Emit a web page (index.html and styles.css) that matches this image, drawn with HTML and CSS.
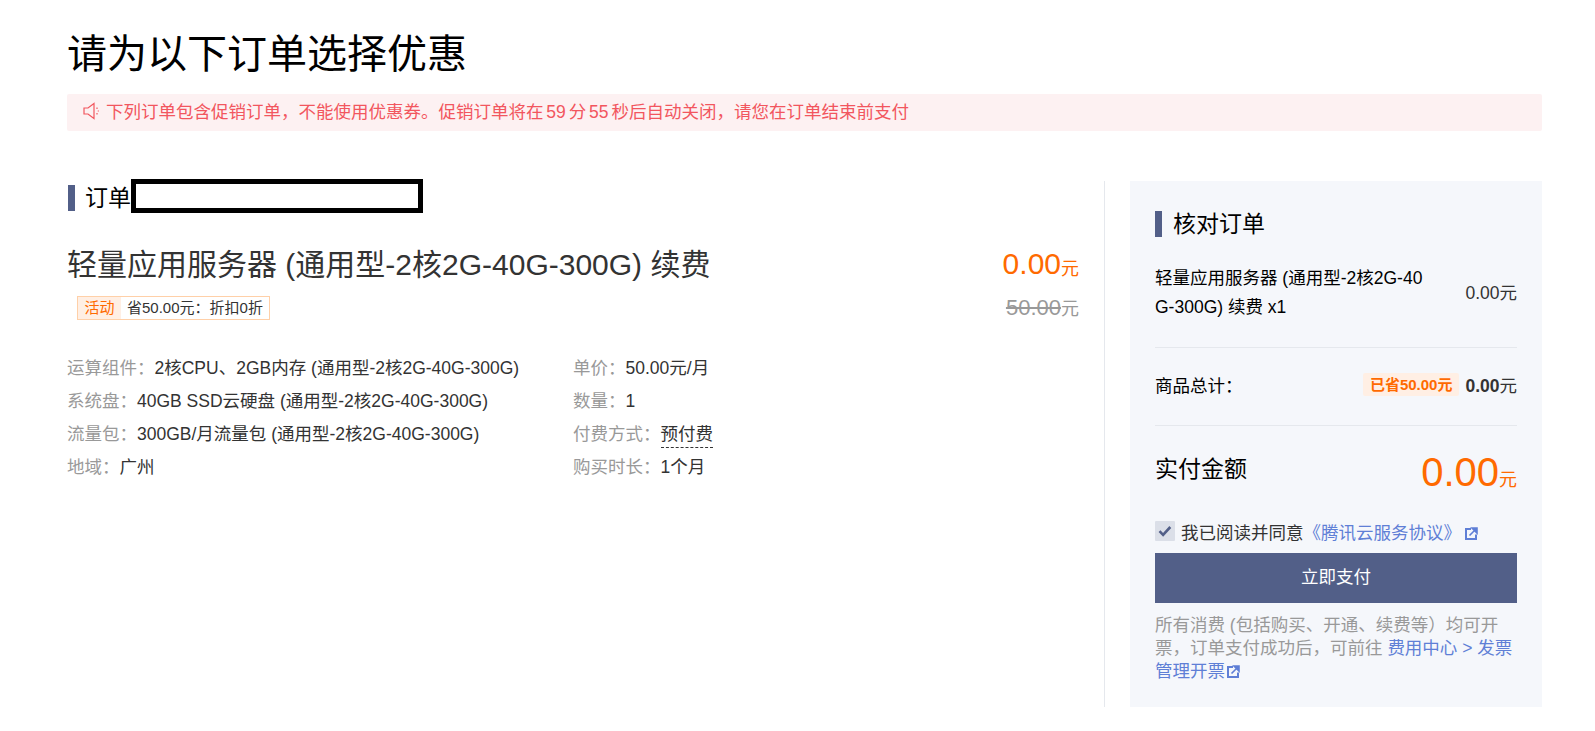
FILE: index.html
```html
<!DOCTYPE html>
<html lang="zh-CN">
<head>
<meta charset="utf-8">
<title>请为以下订单选择优惠</title>
<link rel="stylesheet" href="styles.css">
</head>
<body>
<main class="page">
  <h1 class="page-title">请为以下订单选择优惠</h1>
  <div class="notice">
    <svg class="notice-icon" width="20" height="20" viewBox="0 0 20 20" fill="none" stroke="#f2565e" stroke-width="1.2"><path d="M2 7h4l6-4.500v15L6 13H2z"/><path d="M15 6.500v1.600M15 12v1.600M16.300 9.500v1"/></svg>
    <span>下列订单包含促销订单，不能使用优惠券。促销订单将在 59 分 55 秒后自动关闭，请您在订单结束前支付</span>
  </div>
  <div class="columns">
    <section class="orders">
      <h2 class="section-title section-title-order"><span>订单</span><span class="redact"></span></h2>
      <div class="product-head">
        <h3 class="product-name">轻量应用服务器 (通用型-2核2G-40G-300G) 续费</h3>
        <div class="price"><span class="price-num">0.00</span><span class="unit">元</span></div>
      </div>
      <div class="product-sub">
        <div class="tag"><span class="tag-label">活动</span><span class="tag-text">省50.00元：折扣0折</span></div>
        <div class="old-price"><span class="old-num">50.00</span><span class="old-unit">元</span></div>
      </div>
      <div class="details">
        <ul class="detail-col detail-left">
          <li><span class="key">运算组件：</span><span>2核CPU、2GB内存 (通用型-2核2G-40G-300G)</span></li>
          <li><span class="key">系统盘：</span><span>40GB SSD云硬盘 (通用型-2核2G-40G-300G)</span></li>
          <li><span class="key">流量包：</span><span>300GB/月流量包 (通用型-2核2G-40G-300G)</span></li>
          <li><span class="key">地域：</span><span>广州</span></li>
        </ul>
        <ul class="detail-col">
          <li><span class="key">单价：</span><span>50.00元/月</span></li>
          <li><span class="key">数量：</span><span>1</span></li>
          <li><span class="key">付费方式：</span><span class="dashed">预付费</span></li>
          <li><span class="key">购买时长：</span><span>1个月</span></li>
        </ul>
      </div>
    </section>
    <aside class="summary">
      <h2 class="section-title section-title-summary">核对订单</h2>
      <div class="line-item">
        <div class="line-name">轻量应用服务器 (通用型-2核2G-40G-300G) 续费 x1</div>
        <div class="line-price">0.00元</div>
      </div>
      <div class="total-row">
        <span>商品总计：</span>
        <span class="total-right"><span class="saved">已省50.00元</span><span><b>0.00</b>元</span></span>
      </div>
      <div class="pay-row">
        <span class="pay-label">实付金额</span>
        <span class="pay-price"><span class="pay-num">0.00</span><span class="unit">元</span></span>
      </div>
      <div class="agree">
        <span class="checkbox"><svg width="14" height="12" viewBox="0 0 14 12"><path d="M1.500 6.200l3.600 3.600 7.200-7.800" fill="none" stroke="#525f88" stroke-width="2.600"/></svg></span>
        <span>我已阅读并同意</span><a class="link" href="#">《腾讯云服务协议》<svg class="ext ext-agree" width="14" height="14" viewBox="0 0 14 14"><path d="M7 2H2v10h10V7.500" fill="none" stroke="#5f7fd6" stroke-width="2"/><path d="M5.500 8.500L11.500 2.500M8 1h5v5z" fill="#5f7fd6" stroke="#5f7fd6" stroke-width="1.600"/></svg></a>
      </div>
      <button class="pay-btn" type="button">立即支付</button>
      <p class="invoice">所有消费 (包括购买、开通、续费等）均可开票，订单支付成功后，可前往 <a class="link" href="#">费用中心 &gt; 发票管理开票<svg class="ext" width="14" height="14" viewBox="0 0 14 14"><path d="M7 2H2v10h10V7.500" fill="none" stroke="#5f7fd6" stroke-width="2"/><path d="M5.500 8.500L11.500 2.500M8 1h5v5z" fill="#5f7fd6" stroke="#5f7fd6" stroke-width="1.600"/></svg></a></p>
    </aside>
  </div>
</main>
</body>
</html>
```
FILE: styles.css
```css
* { box-sizing: border-box; }
html, body { margin: 0; padding: 0; background: #fff; }
body {
  font-family: "Liberation Sans", "Noto Sans CJK SC", sans-serif;
  font-size: 17.5px;
  color: #333;
  overflow: hidden;
}
ul { list-style: none; margin: 0; padding: 0; }
a { text-decoration: none; }
.page { padding: 28px 53px 0 67px; }
.page-title { margin: 0; font-size: 40px; line-height: 52px; font-weight: 400; color: #000; }
.notice {
  margin-top: 14px; height: 37px; padding: 0 15px 4px; display: flex; align-items: center; gap: 4px;
  background: #fdf1f2; border-radius: 2px; color: #f2565e; word-spacing: -2px;
}
.notice-icon { flex: none; }
.columns { display: flex; margin-top: 50px; height: 526px; }
.orders { width: 1038px; border-right: 1px solid #e5e8ed; padding-right: 24px; }
.section-title {
  margin: 0; border-left: 7px solid #525f88; font-weight: 400; color: #000;
  font-size: 23px; line-height: 26px; padding-left: 11px;
}
.section-title-order { display: flex; align-items: center; margin: 4px 0 0 1px; height: 26px; padding-left: 10px; }
.redact { display: block; width: 292px; height: 34px; margin-bottom: 4px; border: 5px solid #000; background: #fff; }
.product-head { display: flex; justify-content: space-between; align-items: baseline; margin-top: 34px; margin-right: 1px; }
.product-name { margin: 0; font-size: 30px; line-height: 40px; font-weight: 400; color: #333; }
.price { color: #ff6a00; }
.price-num { font-size: 30px; vertical-align: 1px; }
.unit { font-size: 18px; }
.product-sub { display: flex; justify-content: space-between; align-items: center; margin-top: 9px; margin-right: 1px; }
.tag { display: flex; margin-left: 10px; height: 24px; align-items: stretch; border: 1px solid #ffd0a8; font-size: 15px; line-height: 22px; color: #333; }
.tag-label { background: #ffefe4; color: #ff6a00; padding: 0 6.500px; }
.tag-text { padding: 0 6px; }
.old-price { color: #999; }
.old-num { font-size: 22px; text-decoration: line-through; }
.old-unit { font-size: 18px; }
.details { display: flex; margin-top: 31px; }
.detail-col li { height: 33px; line-height: 33px; white-space: nowrap; }
.detail-left { width: 506px; }
.key { color: #999; }
.dashed { display: inline-block; line-height: 26px; border-bottom: 1px dashed #333; }
.summary { width: 412px; margin-left: 25px; background: #f5f7fb; padding: 30px 25px 0; }
.section-title-summary { line-height: 26px; }
.line-item { display: flex; justify-content: space-between; align-items: center; margin-top: 27px; padding-bottom: 25px; border-bottom: 1px solid #e5e8ed; color: #000; }
.line-name { width: 272px; line-height: 29px; word-break: break-all; }
.line-price { color: #333; margin-bottom: 4px; }
.total-row { display: flex; justify-content: space-between; align-items: center; height: 78px; padding-bottom: 4px; border-bottom: 1px solid #e5e8ed; color: #000; }
.total-right { display: flex; align-items: center; gap: 6px; color: #333; }
.saved { background: #ffefe4; color: #ff6a00; font-size: 15px; font-weight: 700; line-height: 23px; padding: 0 7px; border-radius: 2px; }
.pay-row { display: flex; justify-content: space-between; align-items: flex-start; margin-top: 23px; }
.pay-label { font-size: 23px; line-height: 40px; color: #000; }
.pay-num { font-size: 40px; line-height: 46px; }
.pay-price { color: #ff6a00; }
.agree { display: flex; align-items: center; margin-top: 24px; height: 24px; color: #333; white-space: nowrap; }
.checkbox { width: 20px; height: 20px; background: #dbdfe8; margin-right: 6px; display: flex; align-items: center; justify-content: center; border-radius: 1px; }
.link { color: #5f7fd6; }
.ext { vertical-align: -2px; margin-left: 1px; }
.ext-agree { margin-left: 3px; }
.pay-btn { display: block; width: 100%; height: 50px; margin-top: 10px; padding: 0 0 6px; background: #525f88; color: #fff; border: 0; font: inherit; }
.invoice { margin: 11px 0 0; line-height: 23px; color: #999; word-break: break-all; }
```
